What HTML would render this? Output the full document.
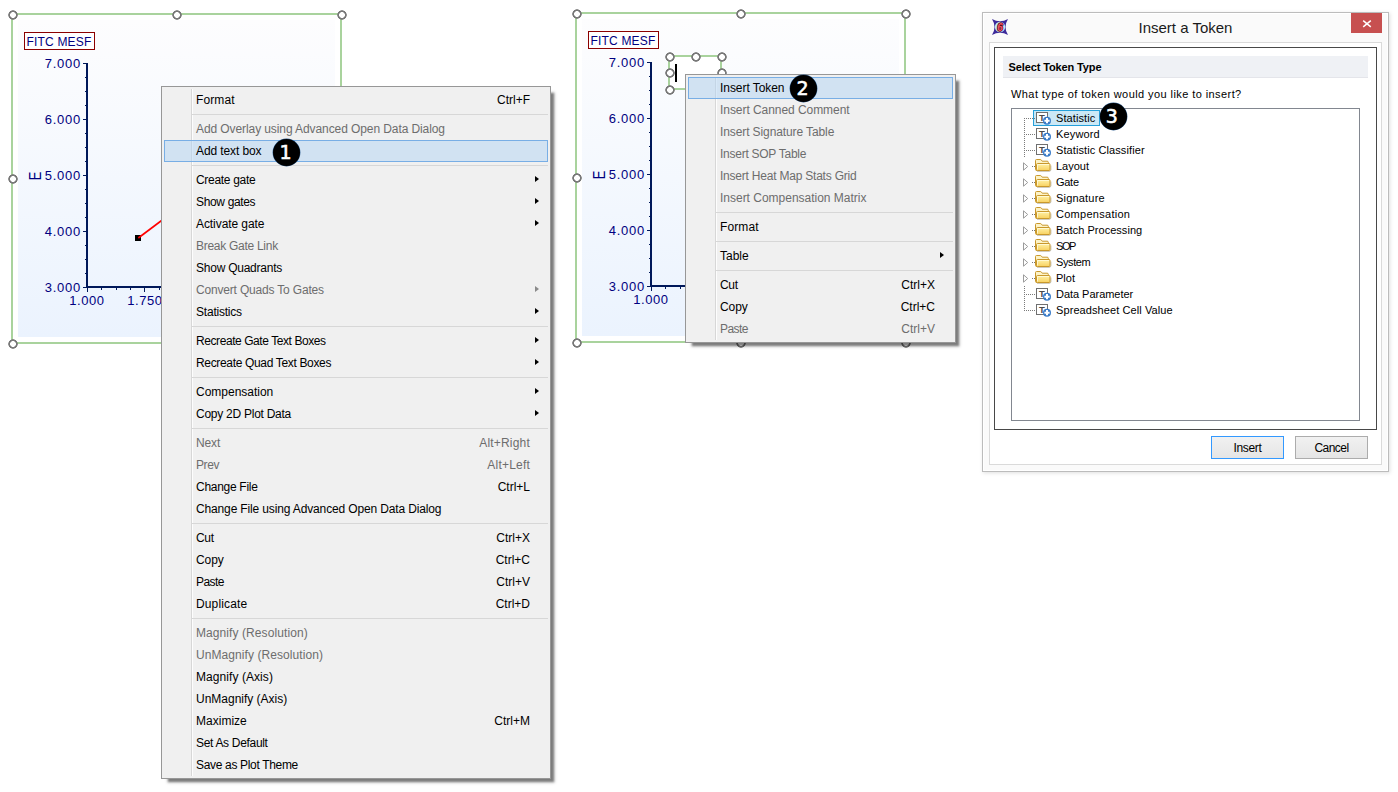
<!DOCTYPE html>
<html lang="en">
<head>
<meta charset="utf-8">
<title>Insert a Token</title>
<style>
*{box-sizing:border-box;margin:0;padding:0}
html,body{width:1398px;height:792px;overflow:hidden;background:#fff}
body{position:relative;font-family:"Liberation Sans",sans-serif;font-size:12px;color:#000}
.abs,.plot *{position:absolute}
/* ---------- plot ---------- */
.plot{position:absolute;width:0;height:0}
.frame{left:11px;top:13px;width:331px;height:331px;border:2px solid #a9d39d}
.pbg{left:18px;top:20px;width:317px;height:317px;background:linear-gradient(to bottom,#fdfdfe 0%,#ebf3fe 100%)}
.hd{width:10px;height:10px;position:absolute;background:radial-gradient(circle at 50% 50%,#fff 0,#fff 2.6px,#787878 3.2px,#787878 4.4px,rgba(120,120,120,0) 5px)}
.ttl{left:24px;top:32px;width:71px;height:18px;border:1px solid #8b0000;background:#fff;color:#000080;font-size:12px;line-height:18px;padding-left:1.4px;white-space:nowrap;letter-spacing:.2px}
.yax{left:86px;top:63px;width:2px;height:225px;background:#00185a}
.xax{left:86px;top:286px;width:240px;height:2px;background:#00185a}
.ymin{left:85px;top:63px;width:1px;height:225px;background:repeating-linear-gradient(to bottom,#00185a 0,#00185a 1px,transparent 1px,transparent 14px)}
.ymaj{left:83px;top:63px;width:3px;height:225px;background:repeating-linear-gradient(to bottom,#00185a 0,#00185a 1px,transparent 1px,transparent 56px)}
.xt{top:288px;width:1px;height:2px;background:#00185a}
.xt.M{height:4px}
.yl{left:30px;width:51px;text-align:right;color:#000080;font-size:13px;line-height:14px;letter-spacing:.75px;white-space:nowrap;margin-top:1px}
.xl{top:294px;width:60px;text-align:center;color:#000080;font-size:13px;line-height:14px;letter-spacing:.55px;white-space:nowrap}
.el{left:25.5px;top:168px;width:20px;height:16px;color:#000080;font-size:13px;line-height:16px;text-align:center;transform:rotate(-90deg) scaleY(1.25)}
.pt{left:135px;top:235px;width:6px;height:6px;background:#000}

/* ---------- menus ---------- */
.menu{position:absolute;background:#f0f0f0;border:1px solid #979797;padding:2px 2px 2px 2px;box-shadow:5px 5px 2px -2px rgba(0,0,0,.42),5px 5px 3px -1px rgba(0,0,0,.16)}
.menu:before{content:"";position:absolute;left:29px;top:2px;bottom:2px;width:1px;background:#d7d7d7;border-right:1px solid #fdfdfd;box-sizing:content-box}
.mi{position:relative;height:22px;line-height:22px;padding-left:31px;white-space:nowrap;border:1px solid transparent}
.mi span{display:inline-block;line-height:20px;vertical-align:top}
.mi .k{position:absolute;right:17px;top:0;text-align:right}
.mi.d{color:#6d6d6d}
.mi.h{background:rgba(178,212,244,.5);border-color:#78aee5}
.mi.a:after{content:"";position:absolute;right:8px;top:5.75px;border-left:4.5px solid #000;border-top:3.75px solid transparent;border-bottom:3.75px solid transparent}
.mi.a.d:after{border-left-color:#8a8a8a}
.sp{height:7px;position:relative}
.sp:before{content:"";position:absolute;left:28px;right:0;top:3px;height:1px;background:#d7d7d7}
.bdg{position:absolute;width:27px;height:27px;border-radius:50%;background:#000;box-shadow:0 0 0 .4px #2b5a8c;color:#fff;font-family:"DejaVu Sans","Liberation Sans",sans-serif;font-size:20px;line-height:27px;text-align:center;-webkit-text-stroke:.6px #fff}
.bdg b{display:block;font-weight:normal;transform:translate(-.9px,-.3px) scale(.95,1)}

.tbx{border:2px solid #a9d39d;background:#fff}
/* ---------- dialog ---------- */
.dlg{position:absolute;left:982px;top:12px;width:407px;height:460px;border:1px solid #bcbcbc;background:#fafafa;box-shadow:inset 0 0 0 1px #fff,1px 1px 4px rgba(0,0,0,.13)}
.dlg *{position:absolute}
.dt{left:0;top:4px;width:405px;text-align:center;font-size:15px;line-height:22px;color:#1a1a1a;letter-spacing:0}
.cls{left:368px;top:0;width:31px;height:20px;background:#c75050}
.cli{left:6px;top:29px;width:393px;height:423px;border:1px solid #dadada;background:#fff}
.pan{left:11px;top:34px;width:383px;height:383px;border:1px solid #484848;background:#fff}
.hdr{left:20px;top:43px;width:365px;height:22px;background:#eff1f5;border-bottom:1px solid #e4e5ea;font-weight:bold;font-size:11px;line-height:23px;padding-left:5.5px;white-space:nowrap;letter-spacing:-.12px}
.q{left:28px;top:74px;font-size:11px;line-height:14px;letter-spacing:.42px;white-space:nowrap}
.tree{left:28px;top:95px;width:349px;height:313px;border:1px solid #828790;background:#fff}
.ti{left:44px;height:16px;line-height:16px;font-size:11px;letter-spacing:.15px;white-space:nowrap}
.sel{left:21px;top:1px;width:67px;height:16px;border:1px solid #26a0da;background:#cbe8f6}
.btn{top:423px;width:73px;height:23px;border:1px solid #acacac;background:linear-gradient(#f1f1f1,#e5e5e5);text-align:center;line-height:23px;font-size:12px}
.btn.def{border-color:#3399ff}
</style>
</head>
<body>

<!-- ======== left plot ======== -->
<div class="plot" style="left:0;top:0">
  <div class="frame"></div>
  <div class="pbg"></div>
  <div class="ttl">FITC MESF</div>
  <div class="ymin"></div><div class="ymaj"></div>
  <div class="yax"></div><div class="xax"></div>
  <div class="xt M" style="left:87px"></div><div class="xt" style="left:101px"></div><div class="xt" style="left:116px"></div><div class="xt" style="left:130px"></div><div class="xt M" style="left:144px"></div><div class="xt" style="left:159px"></div>
  <div class="yl" style="top:56px">7.000</div>
  <div class="yl" style="top:112px">6.000</div>
  <div class="yl" style="top:168px">5.000</div>
  <div class="yl" style="top:224px">4.000</div>
  <div class="yl" style="top:280px">3.000</div>
  <div class="xl" style="left:57px">1.000</div>
  <div class="xl" style="left:115px">1.750</div>
  <div class="el">E</div>
  <div class="pt"></div>
  <svg style="left:130px;top:190px" width="60" height="60" viewBox="130 190 60 60"><line x1="138.3" y1="238" x2="190" y2="199.3" stroke="#ff0000" stroke-width="1.7"/></svg>
  <div class="hd" style="left:7.5px;top:9.5px"></div>
  <div class="hd" style="left:172px;top:9.5px"></div>
  <div class="hd" style="left:336.5px;top:9.5px"></div>
  <div class="hd" style="left:7.5px;top:173.5px"></div>
  <div class="hd" style="left:336.5px;top:173.5px"></div>
  <div class="hd" style="left:7.5px;top:338.5px"></div>
  <div class="hd" style="left:172px;top:338.5px"></div>
  <div class="hd" style="left:336.5px;top:338.5px"></div>
</div>

<!-- ======== middle plot ======== -->
<div class="plot" style="left:564px;top:-1px">
  <div class="frame"></div>
  <div class="pbg"></div>
  <div class="ttl">FITC MESF</div>
  <div class="ymin"></div><div class="ymaj"></div>
  <div class="yax"></div><div class="xax"></div>
  <div class="xt M" style="left:87px"></div><div class="xt" style="left:101px"></div><div class="xt" style="left:116px"></div><div class="xt" style="left:130px"></div><div class="xt M" style="left:144px"></div><div class="xt" style="left:159px"></div>
  <div class="yl" style="top:56px">7.000</div>
  <div class="yl" style="top:112px">6.000</div>
  <div class="yl" style="top:168px">5.000</div>
  <div class="yl" style="top:224px">4.000</div>
  <div class="yl" style="top:280px">3.000</div>
  <div class="xl" style="left:57px">1.000</div>
  <div class="xl" style="left:115px">1.750</div>
  <div class="el">E</div>
  <div class="hd" style="left:7.5px;top:9.5px"></div>
  <div class="hd" style="left:172px;top:9.5px"></div>
  <div class="hd" style="left:336.5px;top:9.5px"></div>
  <div class="hd" style="left:7.5px;top:173.5px"></div>
  <div class="hd" style="left:336.5px;top:173.5px"></div>
  <div class="hd" style="left:7.5px;top:338.5px"></div>
  <div class="hd" style="left:172px;top:338.5px"></div>
  <div class="hd" style="left:336.5px;top:338.5px"></div>
</div>
<!-- small text box being edited -->
<div class="abs tbx" style="left:668px;top:55px;width:54px;height:35px"></div>
<div class="hd" style="left:664.5px;top:51.5px"></div>
<div class="hd" style="left:690.5px;top:51.5px"></div>
<div class="hd" style="left:716.5px;top:51.5px"></div>
<div class="hd" style="left:664.5px;top:67.5px"></div>
<div class="hd" style="left:716.5px;top:67.5px"></div>
<div class="hd" style="left:664.5px;top:84.5px"></div>
<div class="hd" style="left:690.5px;top:84.5px"></div>
<div class="hd" style="left:716.5px;top:84.5px"></div>
<div class="abs" style="left:675px;top:64px;width:2px;height:17.5px;background:#000"></div>


<!-- ======== context menu 1 ======== -->
<div class="menu" style="left:161px;top:86px;width:390px">
  <div class="mi"><span class="t" style="letter-spacing:0.1px">Format</span><span class="k">Ctrl+F</span></div>
  <div class="sp"></div>
  <div class="mi d"><span class="t" style="letter-spacing:-0.09px">Add Overlay using Advanced Open Data Dialog</span></div>
  <div class="mi h"><span class="t" style="letter-spacing:-0.101px">Add text box</span></div>
  <div class="sp"></div>
  <div class="mi a"><span class="t" style="letter-spacing:-0.31px">Create gate</span></div>
  <div class="mi a"><span class="t" style="letter-spacing:-0.345px">Show gates</span></div>
  <div class="mi a"><span class="t" style="letter-spacing:-0.075px">Activate gate</span></div>
  <div class="mi d"><span class="t" style="letter-spacing:-0.278px">Break Gate Link</span></div>
  <div class="mi"><span class="t" style="letter-spacing:-0.239px">Show Quadrants</span></div>
  <div class="mi a d"><span class="t" style="letter-spacing:-0.181px">Convert Quads To Gates</span></div>
  <div class="mi a"><span class="t" style="letter-spacing:-0.211px">Statistics</span></div>
  <div class="sp"></div>
  <div class="mi a"><span class="t" style="letter-spacing:-0.426px">Recreate Gate Text Boxes</span></div>
  <div class="mi a"><span class="t" style="letter-spacing:-0.339px">Recreate Quad Text Boxes</span></div>
  <div class="sp"></div>
  <div class="mi a"><span class="t" style="letter-spacing:-0.01px">Compensation</span></div>
  <div class="mi a"><span class="t" style="letter-spacing:-0.256px">Copy 2D Plot Data</span></div>
  <div class="sp"></div>
  <div class="mi d"><span class="t" style="letter-spacing:-0.133px">Next</span><span class="k" style="letter-spacing:.2px">Alt+Right</span></div>
  <div class="mi d"><span class="t" style="letter-spacing:-0.4px">Prev</span><span class="k" style="letter-spacing:.2px">Alt+Left</span></div>
  <div class="mi"><span class="t" style="letter-spacing:-0.29px">Change File</span><span class="k">Ctrl+L</span></div>
  <div class="mi"><span class="t" style="letter-spacing:-0.143px">Change File using Advanced Open Data Dialog</span></div>
  <div class="sp"></div>
  <div class="mi"><span class="t" style="letter-spacing:-0.3px">Cut</span><span class="k">Ctrl+X</span></div>
  <div class="mi"><span class="t" style="letter-spacing:-0.066px">Copy</span><span class="k">Ctrl+C</span></div>
  <div class="mi"><span class="t" style="letter-spacing:-0.55px">Paste</span><span class="k">Ctrl+V</span></div>
  <div class="mi"><span class="t" style="letter-spacing:0.139px">Duplicate</span><span class="k">Ctrl+D</span></div>
  <div class="sp"></div>
  <div class="mi d"><span class="t" style="letter-spacing:0.085px">Magnify (Resolution)</span></div>
  <div class="mi d"><span class="t" style="letter-spacing:0.077px">UnMagnify (Resolution)</span></div>
  <div class="mi"><span class="t" style="letter-spacing:0.069px">Magnify (Axis)</span></div>
  <div class="mi"><span class="t" style="letter-spacing:-0.007px">UnMagnify (Axis)</span></div>
  <div class="mi"><span class="t" style="letter-spacing:0.014px">Maximize</span><span class="k">Ctrl+M</span></div>
  <div class="mi"><span class="t" style="letter-spacing:-0.316px">Set As Default</span></div>
  <div class="mi"><span class="t" style="letter-spacing:-0.33px">Save as Plot Theme</span></div>
</div>
<div class="bdg" style="left:272.5px;top:138.5px"><b>1</b></div>


<!-- ======== context menu 2 ======== -->
<div class="menu" style="left:685px;top:74px;width:271px">
  <div class="mi h"><span class="t" style="letter-spacing:-0.06px">Insert Token</span></div>
  <div class="mi d"><span class="t" style="letter-spacing:-0.055px">Insert Canned Comment</span></div>
  <div class="mi d"><span class="t" style="letter-spacing:-0.104px">Insert Signature Table</span></div>
  <div class="mi d"><span class="t" style="letter-spacing:-0.26px">Insert SOP Table</span></div>
  <div class="mi d"><span class="t" style="letter-spacing:-0.216px">Insert Heat Map Stats Grid</span></div>
  <div class="mi d"><span class="t" style="letter-spacing:-0.012px">Insert Compensation Matrix</span></div>
  <div class="sp"></div>
  <div class="mi"><span class="t" style="letter-spacing:0.1px">Format</span></div>
  <div class="sp"></div>
  <div class="mi a"><span class="t" style="letter-spacing:0.0px">Table</span></div>
  <div class="sp"></div>
  <div class="mi"><span class="t" style="letter-spacing:-0.3px">Cut</span><span class="k">Ctrl+X</span></div>
  <div class="mi"><span class="t" style="letter-spacing:-0.066px">Copy</span><span class="k">Ctrl+C</span></div>
  <div class="mi d"><span class="t" style="letter-spacing:-0.55px">Paste</span><span class="k">Ctrl+V</span></div>
</div>
<div class="bdg" style="left:790px;top:74.5px"><b>2</b></div>


<!-- ======== dialog ======== -->
<svg width="0" height="0" style="position:absolute"><linearGradient id="fg" x1="0" y1="0" x2="0" y2="1"><stop offset="0" stop-color="#fff2a8"/><stop offset="1" stop-color="#f8d160"/></linearGradient></svg>
<div class="dlg">
  <svg style="left:9px;top:6px" width="16" height="16" viewBox="0 0 16 16">
    <path d="M0 0Q8 4.4 16 0Q11 8 16 16Q8 11.6 0 16Q5 8 0 0Z" fill="#3c2a9a"/>
    <circle cx="8" cy="8" r="5.2" fill="#bfe6fa"/>
    <text x="8.1" y="11.8" text-anchor="middle" font-family="Liberation Sans,sans-serif" font-size="10" font-weight="bold" font-style="italic" fill="#f4566a" stroke="#5a0a10" stroke-width="1.5" paint-order="stroke">6</text>
  </svg>
  <div class="dt">Insert a Token</div>
  <div class="cls"><svg style="left:11px;top:6px" width="10" height="9" viewBox="0 0 10 9"><path d="M1.2 1.6L8.8 7.9M8.8 1.6L1.2 7.9" stroke="#fff" stroke-width="1.5"/></svg></div>
  <div class="cli"></div>
  <div class="pan"></div>
  <div class="hdr">Select Token Type</div>
  <div class="q">What type of token would you like to insert?</div>
  <div class="tree">
    <div class="sel"></div>
    <svg style="left:0;top:0" width="60" height="220" viewBox="1012 109 60 220" shape-rendering="crispEdges"><g stroke="#7a7a7a" stroke-width="1" stroke-dasharray="1,1" fill="none"><path d="M1024.5 118V157M1024 118.5H1036M1024 134.5H1036M1024 150.5H1036"/><path d="M1024.5 286V311M1024 294.5H1036M1024 310.5H1036"/><path d="M1032 166.5H1035"/><path d="M1032 182.5H1035"/><path d="M1032 198.5H1035"/><path d="M1032 214.5H1035"/><path d="M1032 230.5H1035"/><path d="M1032 246.5H1035"/><path d="M1032 262.5H1035"/><path d="M1032 278.5H1035"/></g></svg>
    <svg class="ic" style="left:23px;top:2px" width="18" height="15" viewBox="0 0 18 15"><rect x="1.5" y="1.5" width="11" height="10" fill="#fff" stroke="#6f6f6f" stroke-width="1"/><text x="6.9" y="10.2" text-anchor="middle" font-family="Liberation Sans,sans-serif" font-size="9.5" font-weight="bold" fill="#4a4a4a">T</text><circle cx="12" cy="9.7" r="4" fill="#3a7bc8"/><path d="M9.4 9.7H14.6M12 7.1V12.3" stroke="#fff" stroke-width="2"/></svg>
    <div class="ti" style="top:1px;letter-spacing:0.088px">Statistic</div>
    <svg class="ic" style="left:23px;top:18px" width="18" height="15" viewBox="0 0 18 15"><rect x="1.5" y="1.5" width="11" height="10" fill="#fff" stroke="#6f6f6f" stroke-width="1"/><text x="6.9" y="10.2" text-anchor="middle" font-family="Liberation Sans,sans-serif" font-size="9.5" font-weight="bold" fill="#4a4a4a">T</text><circle cx="12" cy="9.7" r="4" fill="#3a7bc8"/><path d="M9.4 9.7H14.6M12 7.1V12.3" stroke="#fff" stroke-width="2"/></svg>
    <div class="ti" style="top:17px;letter-spacing:0.15px">Keyword</div>
    <svg class="ic" style="left:23px;top:34px" width="18" height="15" viewBox="0 0 18 15"><rect x="1.5" y="1.5" width="11" height="10" fill="#fff" stroke="#6f6f6f" stroke-width="1"/><text x="6.9" y="10.2" text-anchor="middle" font-family="Liberation Sans,sans-serif" font-size="9.5" font-weight="bold" fill="#4a4a4a">T</text><circle cx="12" cy="9.7" r="4" fill="#3a7bc8"/><path d="M9.4 9.7H14.6M12 7.1V12.3" stroke="#fff" stroke-width="2"/></svg>
    <div class="ti" style="top:33px;letter-spacing:0.093px">Statistic Classifier</div>
    <svg class="ic" style="left:10px;top:49px" width="30" height="16" viewBox="0 0 30 16"><path d="M1.5 4.8L5.7 8.5L1.5 12.2Z" fill="#fff" stroke="#9c9c9c" stroke-width="1"/><path d="M15 13.3H27.3Q28.9 13.2 28.9 11.6V7.5" fill="none" stroke="#5a4a20" stroke-opacity=".35" stroke-width="1"/><path d="M13.5 11.6V2.5Q13.5 1.5 14.5 1.5H18.2Q19 1.5 19.5 2.2L20.2 3.2H25.2Q26.3 3.2 26.3 4.3V7H15V12.4Q13.5 12.6 13.5 11.6Z" fill="#fdf3c6" stroke="#c9982c" stroke-width="1"/><path d="M15.5 5.5H27Q28 5.5 28 6.5V11.5Q28 12.5 27 12.5H15.5Q14.5 12.5 14.5 11.5V6.5Q14.5 5.5 15.5 5.5Z" fill="url(#fg)" stroke="#c9982c" stroke-width="1"/><path d="M15.5 11.5V6.5H27" fill="none" stroke="#fffbe0" stroke-opacity=".8" stroke-width="1"/></svg>
    <div class="ti" style="top:49px;letter-spacing:-0.01px">Layout</div>
    <svg class="ic" style="left:10px;top:65px" width="30" height="16" viewBox="0 0 30 16"><path d="M1.5 4.8L5.7 8.5L1.5 12.2Z" fill="#fff" stroke="#9c9c9c" stroke-width="1"/><path d="M15 13.3H27.3Q28.9 13.2 28.9 11.6V7.5" fill="none" stroke="#5a4a20" stroke-opacity=".35" stroke-width="1"/><path d="M13.5 11.6V2.5Q13.5 1.5 14.5 1.5H18.2Q19 1.5 19.5 2.2L20.2 3.2H25.2Q26.3 3.2 26.3 4.3V7H15V12.4Q13.5 12.6 13.5 11.6Z" fill="#fdf3c6" stroke="#c9982c" stroke-width="1"/><path d="M15.5 5.5H27Q28 5.5 28 6.5V11.5Q28 12.5 27 12.5H15.5Q14.5 12.5 14.5 11.5V6.5Q14.5 5.5 15.5 5.5Z" fill="url(#fg)" stroke="#c9982c" stroke-width="1"/><path d="M15.5 11.5V6.5H27" fill="none" stroke="#fffbe0" stroke-opacity=".8" stroke-width="1"/></svg>
    <div class="ti" style="top:65px;letter-spacing:-0.283px">Gate</div>
    <svg class="ic" style="left:10px;top:81px" width="30" height="16" viewBox="0 0 30 16"><path d="M1.5 4.8L5.7 8.5L1.5 12.2Z" fill="#fff" stroke="#9c9c9c" stroke-width="1"/><path d="M15 13.3H27.3Q28.9 13.2 28.9 11.6V7.5" fill="none" stroke="#5a4a20" stroke-opacity=".35" stroke-width="1"/><path d="M13.5 11.6V2.5Q13.5 1.5 14.5 1.5H18.2Q19 1.5 19.5 2.2L20.2 3.2H25.2Q26.3 3.2 26.3 4.3V7H15V12.4Q13.5 12.6 13.5 11.6Z" fill="#fdf3c6" stroke="#c9982c" stroke-width="1"/><path d="M15.5 5.5H27Q28 5.5 28 6.5V11.5Q28 12.5 27 12.5H15.5Q14.5 12.5 14.5 11.5V6.5Q14.5 5.5 15.5 5.5Z" fill="url(#fg)" stroke="#c9982c" stroke-width="1"/><path d="M15.5 11.5V6.5H27" fill="none" stroke="#fffbe0" stroke-opacity=".8" stroke-width="1"/></svg>
    <div class="ti" style="top:81px;letter-spacing:0.189px">Signature</div>
    <svg class="ic" style="left:10px;top:97px" width="30" height="16" viewBox="0 0 30 16"><path d="M1.5 4.8L5.7 8.5L1.5 12.2Z" fill="#fff" stroke="#9c9c9c" stroke-width="1"/><path d="M15 13.3H27.3Q28.9 13.2 28.9 11.6V7.5" fill="none" stroke="#5a4a20" stroke-opacity=".35" stroke-width="1"/><path d="M13.5 11.6V2.5Q13.5 1.5 14.5 1.5H18.2Q19 1.5 19.5 2.2L20.2 3.2H25.2Q26.3 3.2 26.3 4.3V7H15V12.4Q13.5 12.6 13.5 11.6Z" fill="#fdf3c6" stroke="#c9982c" stroke-width="1"/><path d="M15.5 5.5H27Q28 5.5 28 6.5V11.5Q28 12.5 27 12.5H15.5Q14.5 12.5 14.5 11.5V6.5Q14.5 5.5 15.5 5.5Z" fill="url(#fg)" stroke="#c9982c" stroke-width="1"/><path d="M15.5 11.5V6.5H27" fill="none" stroke="#fffbe0" stroke-opacity=".8" stroke-width="1"/></svg>
    <div class="ti" style="top:97px;letter-spacing:0.278px">Compensation</div>
    <svg class="ic" style="left:10px;top:113px" width="30" height="16" viewBox="0 0 30 16"><path d="M1.5 4.8L5.7 8.5L1.5 12.2Z" fill="#fff" stroke="#9c9c9c" stroke-width="1"/><path d="M15 13.3H27.3Q28.9 13.2 28.9 11.6V7.5" fill="none" stroke="#5a4a20" stroke-opacity=".35" stroke-width="1"/><path d="M13.5 11.6V2.5Q13.5 1.5 14.5 1.5H18.2Q19 1.5 19.5 2.2L20.2 3.2H25.2Q26.3 3.2 26.3 4.3V7H15V12.4Q13.5 12.6 13.5 11.6Z" fill="#fdf3c6" stroke="#c9982c" stroke-width="1"/><path d="M15.5 5.5H27Q28 5.5 28 6.5V11.5Q28 12.5 27 12.5H15.5Q14.5 12.5 14.5 11.5V6.5Q14.5 5.5 15.5 5.5Z" fill="url(#fg)" stroke="#c9982c" stroke-width="1"/><path d="M15.5 11.5V6.5H27" fill="none" stroke="#fffbe0" stroke-opacity=".8" stroke-width="1"/></svg>
    <div class="ti" style="top:113px;letter-spacing:0.037px">Batch Processing</div>
    <svg class="ic" style="left:10px;top:129px" width="30" height="16" viewBox="0 0 30 16"><path d="M1.5 4.8L5.7 8.5L1.5 12.2Z" fill="#fff" stroke="#9c9c9c" stroke-width="1"/><path d="M15 13.3H27.3Q28.9 13.2 28.9 11.6V7.5" fill="none" stroke="#5a4a20" stroke-opacity=".35" stroke-width="1"/><path d="M13.5 11.6V2.5Q13.5 1.5 14.5 1.5H18.2Q19 1.5 19.5 2.2L20.2 3.2H25.2Q26.3 3.2 26.3 4.3V7H15V12.4Q13.5 12.6 13.5 11.6Z" fill="#fdf3c6" stroke="#c9982c" stroke-width="1"/><path d="M15.5 5.5H27Q28 5.5 28 6.5V11.5Q28 12.5 27 12.5H15.5Q14.5 12.5 14.5 11.5V6.5Q14.5 5.5 15.5 5.5Z" fill="url(#fg)" stroke="#c9982c" stroke-width="1"/><path d="M15.5 11.5V6.5H27" fill="none" stroke="#fffbe0" stroke-opacity=".8" stroke-width="1"/></svg>
    <div class="ti" style="top:129px;letter-spacing:-1.45px">SOP</div>
    <svg class="ic" style="left:10px;top:145px" width="30" height="16" viewBox="0 0 30 16"><path d="M1.5 4.8L5.7 8.5L1.5 12.2Z" fill="#fff" stroke="#9c9c9c" stroke-width="1"/><path d="M15 13.3H27.3Q28.9 13.2 28.9 11.6V7.5" fill="none" stroke="#5a4a20" stroke-opacity=".35" stroke-width="1"/><path d="M13.5 11.6V2.5Q13.5 1.5 14.5 1.5H18.2Q19 1.5 19.5 2.2L20.2 3.2H25.2Q26.3 3.2 26.3 4.3V7H15V12.4Q13.5 12.6 13.5 11.6Z" fill="#fdf3c6" stroke="#c9982c" stroke-width="1"/><path d="M15.5 5.5H27Q28 5.5 28 6.5V11.5Q28 12.5 27 12.5H15.5Q14.5 12.5 14.5 11.5V6.5Q14.5 5.5 15.5 5.5Z" fill="url(#fg)" stroke="#c9982c" stroke-width="1"/><path d="M15.5 11.5V6.5H27" fill="none" stroke="#fffbe0" stroke-opacity=".8" stroke-width="1"/></svg>
    <div class="ti" style="top:145px;letter-spacing:-0.39px">System</div>
    <svg class="ic" style="left:10px;top:161px" width="30" height="16" viewBox="0 0 30 16"><path d="M1.5 4.8L5.7 8.5L1.5 12.2Z" fill="#fff" stroke="#9c9c9c" stroke-width="1"/><path d="M15 13.3H27.3Q28.9 13.2 28.9 11.6V7.5" fill="none" stroke="#5a4a20" stroke-opacity=".35" stroke-width="1"/><path d="M13.5 11.6V2.5Q13.5 1.5 14.5 1.5H18.2Q19 1.5 19.5 2.2L20.2 3.2H25.2Q26.3 3.2 26.3 4.3V7H15V12.4Q13.5 12.6 13.5 11.6Z" fill="#fdf3c6" stroke="#c9982c" stroke-width="1"/><path d="M15.5 5.5H27Q28 5.5 28 6.5V11.5Q28 12.5 27 12.5H15.5Q14.5 12.5 14.5 11.5V6.5Q14.5 5.5 15.5 5.5Z" fill="url(#fg)" stroke="#c9982c" stroke-width="1"/><path d="M15.5 11.5V6.5H27" fill="none" stroke="#fffbe0" stroke-opacity=".8" stroke-width="1"/></svg>
    <div class="ti" style="top:161px;letter-spacing:0.017px">Plot</div>
    <svg class="ic" style="left:23px;top:178px" width="18" height="15" viewBox="0 0 18 15"><rect x="1.5" y="1.5" width="11" height="10" fill="#fff" stroke="#6f6f6f" stroke-width="1"/><text x="6.9" y="10.2" text-anchor="middle" font-family="Liberation Sans,sans-serif" font-size="9.5" font-weight="bold" fill="#4a4a4a">T</text><circle cx="12" cy="9.7" r="4" fill="#3a7bc8"/><path d="M9.4 9.7H14.6M12 7.1V12.3" stroke="#fff" stroke-width="2"/></svg>
    <div class="ti" style="top:177px;letter-spacing:-0.035px">Data Parameter</div>
    <svg class="ic" style="left:23px;top:194px" width="18" height="15" viewBox="0 0 18 15"><rect x="1.5" y="1.5" width="11" height="10" fill="#fff" stroke="#6f6f6f" stroke-width="1"/><text x="6.9" y="10.2" text-anchor="middle" font-family="Liberation Sans,sans-serif" font-size="9.5" font-weight="bold" fill="#4a4a4a">T</text><circle cx="12" cy="9.7" r="4" fill="#3a7bc8"/><path d="M9.4 9.7H14.6M12 7.1V12.3" stroke="#fff" stroke-width="2"/></svg>
    <div class="ti" style="top:193px;letter-spacing:0.088px">Spreadsheet Cell Value</div>
  </div>
  <div class="btn def" style="left:228px;letter-spacing:-.3px">Insert</div>
  <div class="btn" style="left:312px;letter-spacing:-.55px">Cancel</div>
</div>
<div class="bdg" style="left:1100.2px;top:102.5px"><b style="transform:translate(-1.6px,-.3px) scale(.95,1)">3</b></div>


</body>
</html>
